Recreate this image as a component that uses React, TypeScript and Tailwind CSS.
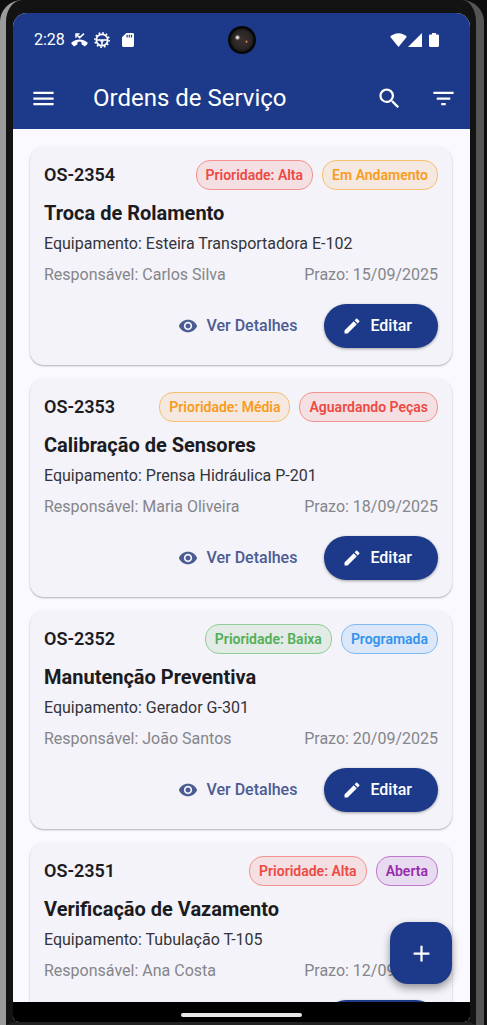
import { MdAdd, MdEdit, MdFilterList, MdMenu, MdSearch, MdVisibility } from "react-icons/md";

type Tone = "red" | "orange" | "green" | "blue" | "purple";

interface Order {
  id: string;
  title: string;
  equipment: string;
  owner: string;
  due: string;
  priority: string;
  priorityTone: Tone;
  status: string;
  statusTone: Tone;
}

const tones: Record<Tone, string> = {
  red: "border-[#f4938f] bg-[#f4dfe3] text-[#ec4a43]",
  orange: "border-[#f6bf6e] bg-[#f5e8e0] text-[#f89c20]",
  green: "border-[#93cd97] bg-[#e2ebe6] text-[#52af57]",
  blue: "border-[#7dbaf3] bg-[#dce8f9] text-[#3393ee]",
  purple: "border-[#bf78cd] bg-[#e8daf0] text-[#972cac]",
};

const orders: Order[] = [
  {
    id: "OS-2354",
    title: "Troca de Rolamento",
    equipment: "Esteira Transportadora E-102",
    owner: "Carlos Silva",
    due: "15/09/2025",
    priority: "Alta",
    priorityTone: "red",
    status: "Em Andamento",
    statusTone: "orange",
  },
  {
    id: "OS-2353",
    title: "Calibração de Sensores",
    equipment: "Prensa Hidráulica P-201",
    owner: "Maria Oliveira",
    due: "18/09/2025",
    priority: "Média",
    priorityTone: "orange",
    status: "Aguardando Peças",
    statusTone: "red",
  },
  {
    id: "OS-2352",
    title: "Manutenção Preventiva",
    equipment: "Gerador G-301",
    owner: "João Santos",
    due: "20/09/2025",
    priority: "Baixa",
    priorityTone: "green",
    status: "Programada",
    statusTone: "blue",
  },
  {
    id: "OS-2351",
    title: "Verificação de Vazamento",
    equipment: "Tubulação T-105",
    owner: "Ana Costa",
    due: "12/09/2025",
    priority: "Alta",
    priorityTone: "red",
    status: "Aberta",
    statusTone: "purple",
  },
];

function Chip({ tone, children }: { tone: Tone; children: string }) {
  return (
    <span
      className={`flex h-[30px] items-center whitespace-nowrap rounded-[14px] border px-[9px] text-sm font-semibold ${tones[tone]}`}
    >
      {children}
    </span>
  );
}

function OrderCard({ order }: { order: Order }) {
  return (
    <article className="shrink-0 rounded-[14px] bg-[#f3f3f9] px-3.5 pt-[13px] pb-[17px] shadow-[0_1px_2px_rgba(0,0,0,0.3)]">
      <div className="flex items-center gap-[9px]">
        <span className="mr-auto text-lg font-semibold text-[#1b1b21]">{order.id}</span>
        <Chip tone={order.priorityTone}>{`Prioridade: ${order.priority}`}</Chip>
        <Chip tone={order.statusTone}>{order.status}</Chip>
      </div>
      <h2 className="mt-2.5 text-xl leading-[26px] font-bold text-[#1b1b21]">{order.title}</h2>
      <p className="mt-2 text-base leading-5 text-[#33333a]">Equipamento: {order.equipment}</p>
      <div className="mt-[11px] flex justify-between text-base leading-5 text-[#85858a]">
        <span>Responsável: {order.owner}</span>
        <span>Prazo: {order.due}</span>
      </div>
      <div className="mt-[19px] flex items-center justify-end gap-[27px]">
        <button type="button" className="flex items-center gap-2 text-base font-medium text-[#4c5b92]">
          <MdVisibility className="size-5" />
          Ver Detalhes
        </button>
        <button
          type="button"
          className="flex h-11 items-center gap-2 rounded-full bg-[#1c3a89] pr-[26px] pl-[18px] text-base font-medium text-white shadow-[0_1px_3px_rgba(0,0,0,0.35)]"
        >
          <MdEdit className="size-5" />
          Editar
        </button>
      </div>
    </article>
  );
}

function MissedCallIcon() {
  return (
    <svg viewBox="0 0 17 14" className="h-3.5 w-[17px]" fill="none" stroke="currentColor" aria-hidden="true">
      <path d="M5 4.8V1.1h3.6M5.3 1.4 8.6 4.6 13 .6" strokeWidth="1.5" />
      <path
        d="M8.5 6.6c-3 0-5.7 1.100-7.900 3-.4.400-.4.900 0 1.300l2 2c.4.400.9.400 1.300.1.600-.5 1.300-1 2-1.300.4-.2.600-.5.600-.9V8.900c1.300-.3 2.700-.3 4 0v1.900c0 .4.200.7.600.9.700.300 1.400.8 2 1.300.4.300.9.300 1.300-.1l2-2c.4-.4.4-.9 0-1.300-2.200-1.900-4.900-3-7.900-3z"
        fill="currentColor"
        stroke="none"
      />
    </svg>
  );
}

function GearIcon() {
  return (
    <svg viewBox="0 0 16 16" className="size-4" fill="none" stroke="currentColor" aria-hidden="true">
      <circle cx="8" cy="8" r="5.7" strokeWidth="1.7" />
      <circle cx="8" cy="8" r="7.1" strokeWidth="1.6" strokeDasharray="1.7 2.017" />
      <path d="M2.500 7.900h11M8 8v5.500" strokeWidth="1.500" />
      <path d="M5.500 8 8 10.300 10.500 8" strokeWidth="1" />
    </svg>
  );
}

function CardIcon() {
  return (
    <svg viewBox="0 0 12 14" className="h-3.5 w-3" aria-hidden="true">
      <path
        fill="currentColor"
        fillRule="evenodd"
        d="M4.300 0h6.200C11.300 0 12 .6 12 1.400v11.200c0 .8-.7 1.400-1.500 1.400h-9C.7 14 0 13.400 0 12.600V4.300zM4.500 1.800v2.600h1.200V1.800zm2.200 0v2.600h1.200V1.800zm2.200 0v2.600h1.200V1.800z"
      />
    </svg>
  );
}

function SignalIcons() {
  return (
    <div className="mr-2.5 flex items-center justify-end">
      <svg viewBox="0 0 17 14" className="h-3.5 w-[17px]" aria-hidden="true">
        <path fill="currentColor" d="M8.500 14 .2 3.700C2.500 1.400 5.300.2 8.500.2s6 1.200 8.300 3.500z" />
      </svg>
      <svg viewBox="0 0 14 14" className="ml-px size-3.5" aria-hidden="true">
        <path fill="currentColor" d="M14 0v14H0z" />
      </svg>
      <svg viewBox="0 0 10 14" className="ml-[7px] h-3.5 w-2.5" aria-hidden="true">
        <path
          fill="currentColor"
          d="M3 0h4v1.400h1.700c.7 0 1.300.5 1.300 1.200v10.200c0 .7-.6 1.200-1.300 1.200H1.300C.6 14 0 13.500 0 12.800V2.600c0-.7.6-1.200 1.300-1.200H3z"
        />
      </svg>
    </div>
  );
}

function Camera() {
  return (
    <svg viewBox="0 0 28 28" className="size-7" aria-hidden="true">
      <defs>
        <radialGradient id="lens">
          <stop offset="0" stopColor="#3b302c" />
          <stop offset="0.75" stopColor="#2a2726" />
          <stop offset="1" stopColor="#1b191a" />
        </radialGradient>
        <radialGradient id="glint">
          <stop offset="0" stopColor="#ffffff" />
          <stop offset="0.35" stopColor="#c9c2bc" />
          <stop offset="1" stopColor="#3b302c" stopOpacity="0" />
        </radialGradient>
      </defs>
      <circle cx="14" cy="14" r="14" fill="#060608" />
      <circle cx="14" cy="14" r="11.5" fill="url(#lens)" />
      <circle cx="9.500" cy="11.500" r="3.500" fill="url(#glint)" />
      <circle cx="18.500" cy="15.700" r="1.600" fill="#7a3a22" />
      <circle cx="18.500" cy="15.700" r="0.700" fill="#f1b291" />
    </svg>
  );
}

function StatusBar() {
  return (
    <div className="grid h-[54px] grid-cols-[1fr_auto_1fr] items-center px-[21px]">
      <div className="flex items-center gap-1.5">
        <span className="text-base">2:28</span>
        <MissedCallIcon />
        <GearIcon />
        <span className="ml-1.5">
          <CardIcon />
        </span>
      </div>
      <Camera />
      <SignalIcons />
    </div>
  );
}

export default function App() {
  return (
    <div className="h-screen bg-[#0d0d0d] pr-[3px] font-[Roboto,sans-serif]">
      <div className="flex h-full flex-col rounded-t-[22px] border-r-8 border-l-[6px] border-r-[#555555] border-l-[#9b9b9b] bg-[#131313]">
        <div className="flex min-h-0 flex-1 flex-col border-t-[13px] border-r-[6px] border-b-[3px] border-l-[7px] border-transparent border-b-[#222222]">
          <div className="relative flex min-h-0 flex-1 flex-col overflow-hidden rounded-t-[14px] rounded-b-md bg-[#faf9ff]">
            <header className="shrink-0 bg-[#1c3a89] text-white">
              <StatusBar />
              <div className="flex h-[62px] items-center pr-[13px] pl-[17px]">
                <button type="button" aria-label="Menu">
                  <MdMenu className="size-[27px]" />
                </button>
                <h1 className="ml-9 text-2xl">Ordens de Serviço</h1>
                <button type="button" aria-label="Buscar" className="ml-auto">
                  <MdSearch className="size-[27px]" />
                </button>
                <button type="button" aria-label="Filtrar" className="ml-[27px]">
                  <MdFilterList className="size-[27px]" />
                </button>
              </div>
            </header>
            <main className="flex min-h-0 flex-1 flex-col gap-3.5 overflow-y-auto py-[18px] pr-[18px] pl-[17px] [scrollbar-width:none]">
              {orders.map((order) => (
                <OrderCard key={order.id} order={order} />
              ))}
            </main>
            <button
              type="button"
              aria-label="Nova ordem"
              className="absolute right-[18px] bottom-[38px] flex size-[62px] items-center justify-center rounded-[18px] bg-[#1c3a89] text-white shadow-[0_4px_9px_rgba(0,0,0,0.4)]"
            >
              <MdAdd className="size-[27px]" />
            </button>
            <div className="flex h-5 shrink-0 justify-center bg-black pt-[11px]">
              <div className="h-1 w-[121px] rounded-full bg-[#e8e8e8]" />
            </div>
          </div>
        </div>
      </div>
    </div>
  );
}
